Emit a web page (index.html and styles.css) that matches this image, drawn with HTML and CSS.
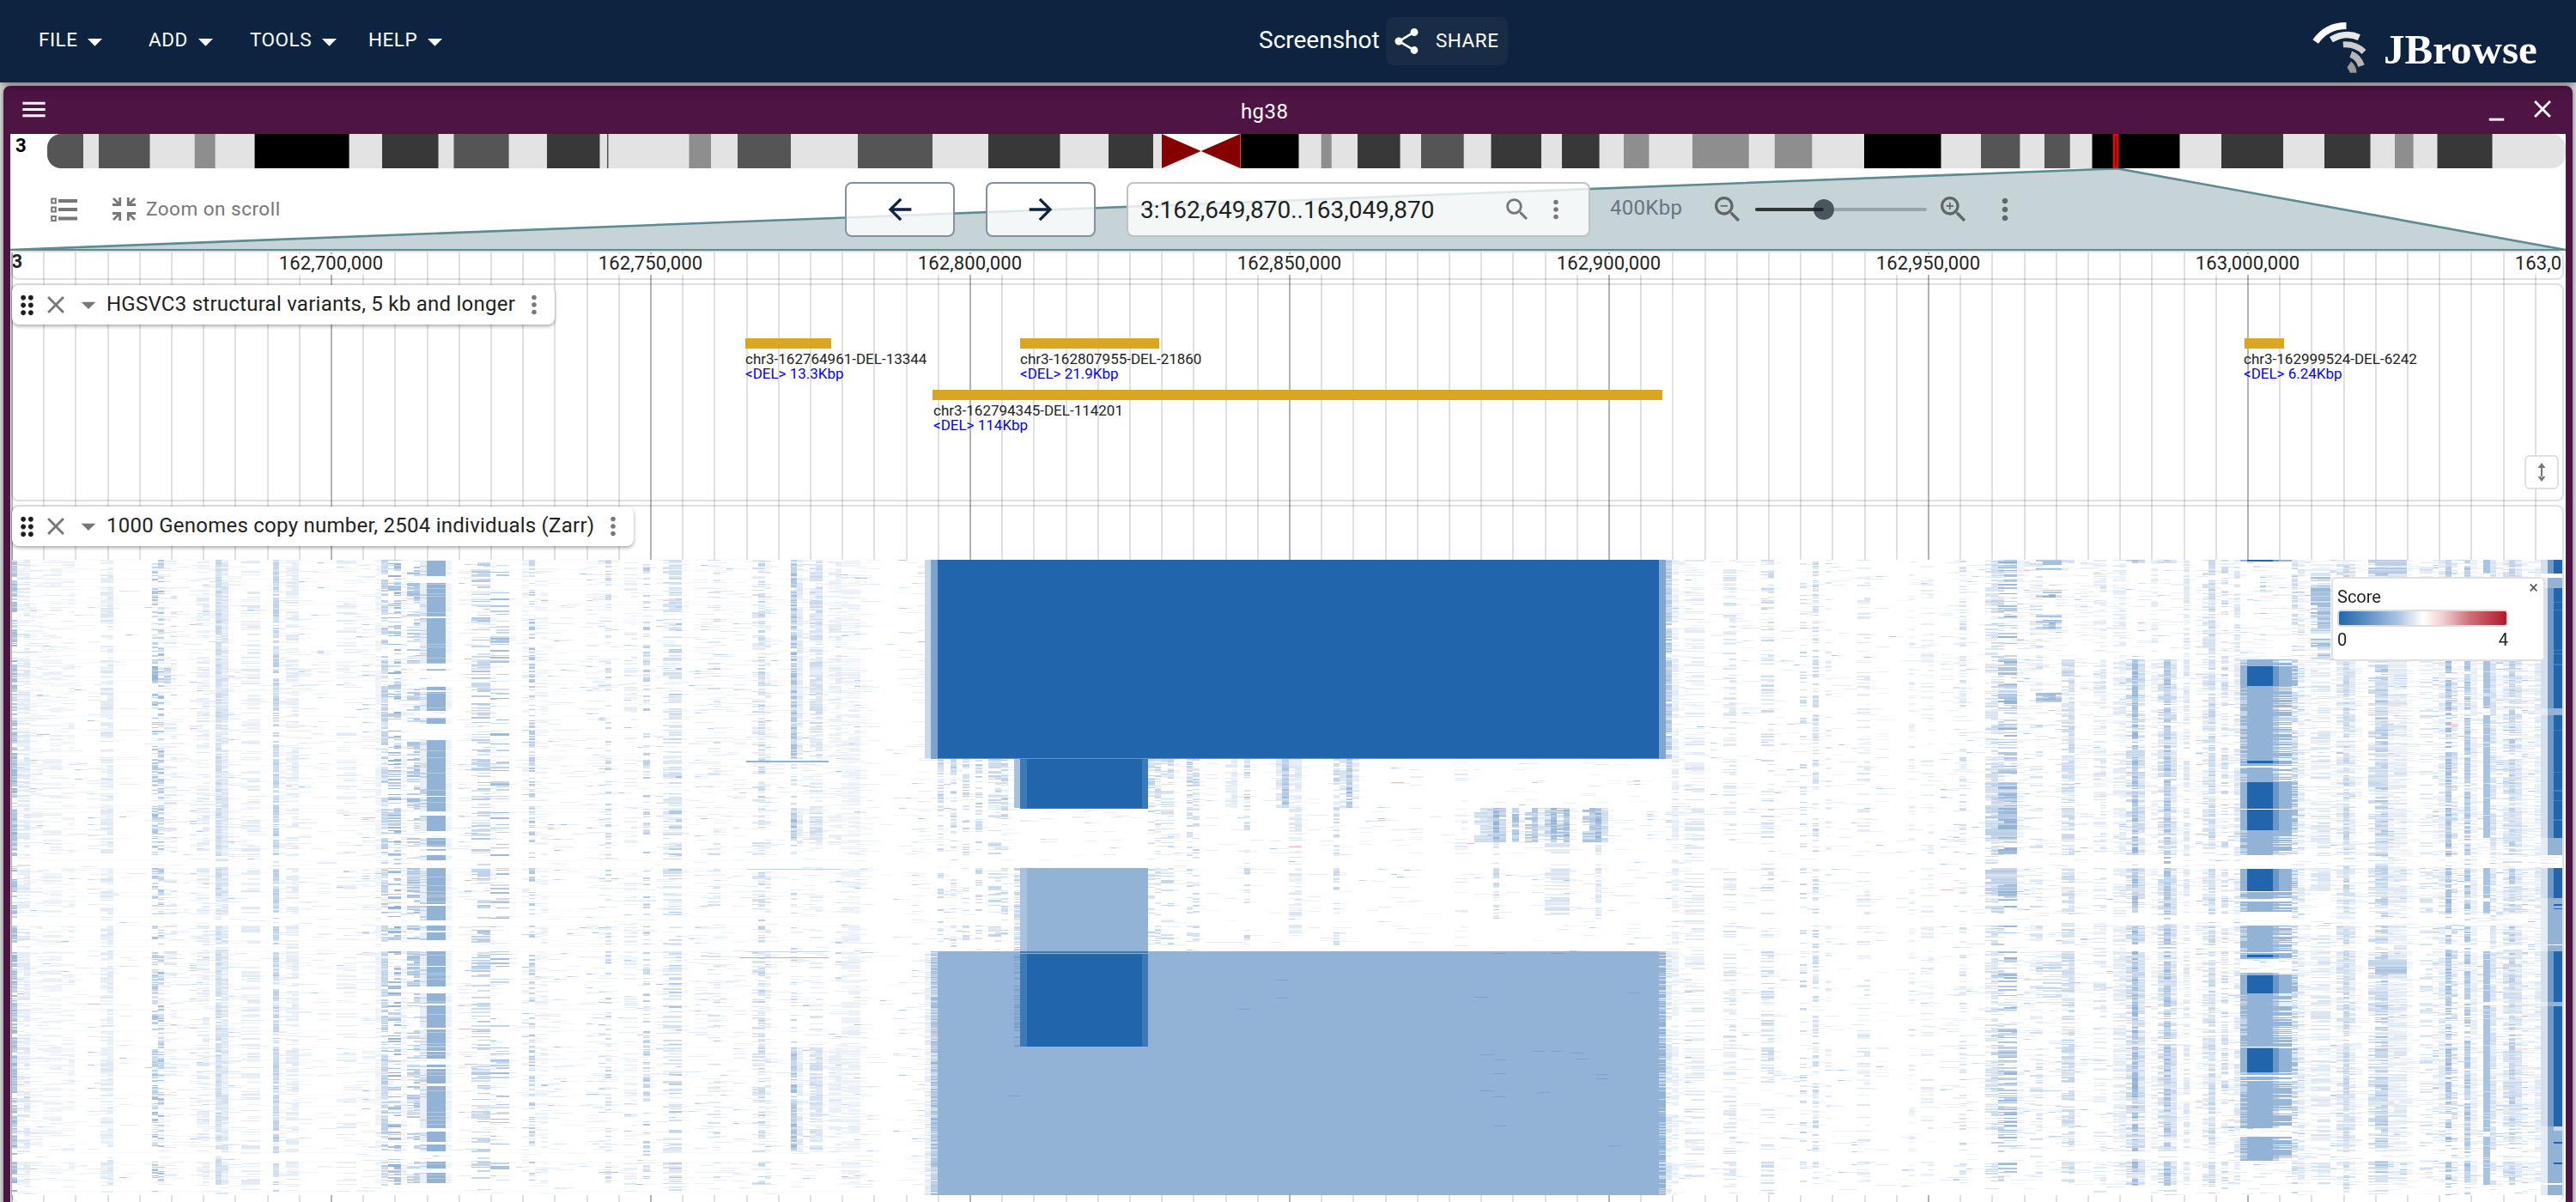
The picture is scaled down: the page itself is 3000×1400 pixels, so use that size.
FILE: index.html
```html
<!DOCTYPE html>
<html lang="en">
<head>
<meta charset="utf-8">
<title>JBrowse</title>
<link rel="stylesheet" href="styles.css">
</head>
<body>
<svg class="sprite" aria-hidden="true">
  <symbol id="i-caret" viewBox="0 0 24 24"><path d="M7 10l5 5 5-5z"/></symbol>
  <symbol id="i-menu" viewBox="0 0 24 24"><path d="M3 18h18v-2H3v2zm0-5h18v-2H3v2zm0-7v2h18V6H3z"/></symbol>
  <symbol id="i-close" viewBox="0 0 24 24"><path d="M19 6.41L17.59 5 12 10.59 6.41 5 5 6.41 10.59 12 5 17.59 6.41 19 12 13.41 17.59 19 19 17.59 13.41 12z"/></symbol>
  <symbol id="i-min" viewBox="0 0 24 24"><path d="M6 19h12v2H6z"/></symbol>
  <symbol id="i-share" viewBox="0 0 24 24"><path d="M18 16.08c-.76 0-1.44.3-1.96.77L8.91 12.7c.05-.23.09-.46.09-.7s-.04-.47-.09-.7l7.05-4.11c.54.5 1.25.81 2.04.81 1.66 0 3-1.34 3-3s-1.34-3-3-3-3 1.34-3 3c0 .24.04.47.09.7L8.04 9.81C7.5 9.31 6.79 9 6 9c-1.66 0-3 1.34-3 3s1.34 3 3 3c.79 0 1.5-.31 2.04-.81l7.12 4.16c-.05.21-.08.43-.08.65 0 1.61 1.31 2.92 2.92 2.92s2.92-1.31 2.92-2.92-1.31-2.92-2.92-2.92z"/></symbol>
  <symbol id="i-back" viewBox="0 0 24 24"><path d="M20 11H7.83l5.59-5.59L12 4l-8 8 8 8 1.41-1.41L7.83 13H20v-2z"/></symbol>
  <symbol id="i-forward" viewBox="0 0 24 24"><path d="M12 4l-1.41 1.41L16.17 11H4v2h12.17l-5.58 5.59L12 20l8-8z"/></symbol>
  <symbol id="i-search" viewBox="0 0 24 24"><path d="M15.5 14h-.79l-.28-.27C15.41 12.59 16 11.11 16 9.5 16 5.91 13.09 3 9.5 3S3 5.91 3 9.5 5.91 16 9.5 16c1.61 0 3.09-.59 4.23-1.57l.27.28v.79l5 4.99L20.49 19l-4.99-5zm-6 0C7.01 14 5 11.99 5 9.5S7.01 5 9.5 5 14 7.01 14 9.5 11.99 14 9.5 14z"/></symbol>
  <symbol id="i-more" viewBox="0 0 24 24"><path d="M12 8c1.1 0 2-.9 2-2s-.9-2-2-2-2 .9-2 2 .9 2 2 2zm0 2c-1.1 0-2 .9-2 2s.9 2 2 2 2-.9 2-2-.9-2-2-2zm0 6c-1.1 0-2 .9-2 2s.9 2 2 2 2-.9 2-2-.9-2-2-2z"/></symbol>
  <symbol id="i-drag" viewBox="0 0 24 24"><path d="M11 18c0 1.1-.9 2-2 2s-2-.9-2-2 .9-2 2-2 2 .9 2 2zm-2-8c-1.1 0-2 .9-2 2s.9 2 2 2 2-.9 2-2-.9-2-2-2zm0-6c-1.1 0-2 .9-2 2s.9 2 2 2 2-.9 2-2-.9-2-2-2zm6 4c1.1 0 2-.9 2-2s-.9-2-2-2-2 .9-2 2 .9 2 2 2zm0 2c-1.1 0-2 .9-2 2s.9 2 2 2 2-.9 2-2-.9-2-2-2zm0 6c-1.1 0-2 .9-2 2s.9 2 2 2 2-.9 2-2-.9-2-2-2z"/></symbol>
</svg>

<header class="appbar">
  <nav class="menus">
    <button class="menu menu-file">FILE<svg class="caret"><use href="#i-caret"/></svg></button>
    <button class="menu menu-add">ADD<svg class="caret"><use href="#i-caret"/></svg></button>
    <button class="menu menu-tools">TOOLS<svg class="caret"><use href="#i-caret"/></svg></button>
    <button class="menu menu-help">HELP<svg class="caret"><use href="#i-caret"/></svg></button>
  </nav>
  <div class="session">
    <span class="session-name">Screenshot</span>
    <button class="share"><svg class="share-icon"><use href="#i-share"/></svg>SHARE</button>
  </div>
  <div class="brand">
    <svg class="brand-mark" viewBox="100 76 190 182" fill="none">
      <path d="M111 146Q150 90 219 90" stroke="#fff" stroke-width="24"/>
      <path d="M166 139Q215 109 264 131" stroke="#e8e8e8" stroke-width="22"/>
      <path d="M208 156Q252 153 281 182" stroke="#ccc" stroke-width="21"/>
      <path d="M235 190Q262 200 272 231" stroke="#b5b5b5" stroke-width="23"/>
      <path d="M236 215L222 236L233 255H255Q256 233 236 215Z" fill="#999"/>
    </svg>
    <span class="brand-name">JBrowse</span>
  </div>
</header>

<main class="view">
  <div class="titlebar">
    <svg class="menu-icon"><use href="#i-menu"/></svg>
    <span class="view-name">hg38</span>
    <div class="window-buttons">
      <svg class="min-icon"><use href="#i-min"/></svg>
      <svg class="close-icon"><use href="#i-close"/></svg>
    </div>
  </div>

  <div class="content">
    <div class="overview">
      <span class="ref-name">3</span>
      <svg class="ideogram" id="ideogram" viewBox="55 0 2933 40"></svg>
    </div>

    <div class="header">
      <svg class="zoom-shape" viewBox="12 196 2976 96">
        <path d="M12 291L2461 196H2467L2988 291Z" fill="#c6d4d8"/>
        <path d="M12 291L2461 196.5H2467L2988 291" fill="none" stroke="#5c8b90" stroke-width="2.6"/>
        <path d="M12 291H2988" stroke="#5c8b90" stroke-width="2"/>
      </svg>
      <div class="toolbar">
        <svg class="tracklist-icon" viewBox="0 0 31 28" fill="none" stroke="#777">
          <path d="M9 4h22M9 14h22M9 24.500h22" stroke-width="4"/>
          <path d="M1.200 1.500h4.600v5h-4.600zM1.200 11.500h4.600v5h-4.600zM1.200 22h4.600v5h-4.600z" stroke-width="2"/>
        </svg>
        <svg class="shrink-icon" viewBox="0 0 27 27" fill="none" stroke="#777" stroke-width="2.800">
          <path d="M1 1l7 7M26 1l-7 7M1 26l7-7M26 26l-7-7M0 8.500h8.700V0M27 8.500h-8.700V0M0 18.500h8.700V27M27 18.500h-8.700V27"/>
        </svg>
        <span class="zoom-scroll">Zoom on scroll</span>
        <div class="nav">
          <button class="pan"><svg><use href="#i-back"/></svg></button>
          <button class="pan"><svg><use href="#i-forward"/></svg></button>
        </div>
        <div class="search">
          <span class="locus">3:162,649,870..163,049,870</span>
          <svg class="search-icon"><use href="#i-search"/></svg>
          <svg class="search-more"><use href="#i-more"/></svg>
        </div>
        <span class="span-size">400Kbp</span>
        <svg class="zoom-icon" viewBox="0 0 24 24"><use href="#i-search"/><path d="M7 9h5v1H7z"/></svg>
        <svg class="slider" viewBox="0 0 200 26">
          <rect x="0" y="11" width="200" height="4" rx="2" fill="#9aa5aa"/>
          <circle cx="80" cy="13" r="12" fill="#4b565c"/>
          <rect x="0" y="11" width="80" height="4" rx="2" fill="#1c1d1f" fill-opacity=".82"/>
        </svg>
        <svg class="zoom-icon" viewBox="0 0 24 24"><use href="#i-search"/><path d="M12 10h-2v2H9v-2H7V9h2V7h1v2h2v1z"/></svg>
        <svg class="toolbar-more"><use href="#i-more"/></svg>
      </div>
    </div>

    <div class="tracks">
      <svg class="gridlines" id="gridlines" viewBox="12 292 2976 1108"></svg>
      <div class="ruler" id="ruler">
        <svg class="ruler-svg" id="ruler-svg" viewBox="15 294 2969 30"></svg>
      </div>

      <section class="track track-variants">
        <div class="track-label">
          <svg class="drag"><use href="#i-drag"/></svg>
          <svg class="x"><use href="#i-close"/></svg>
          <svg class="drop"><use href="#i-caret"/></svg>
          <span class="track-name name-variants">HGSVC3 structural variants, 5 kb and longer</span>
          <svg class="dots"><use href="#i-more"/></svg>
        </div>
        <svg class="features" viewBox="15 378 2969 204">
          <g fill="#daa520">
            <rect x="868" y="394" width="100" height="12"/>
            <rect x="1188" y="394" width="162" height="12"/>
            <rect x="1086" y="454" width="850" height="12"/>
            <rect x="2614" y="394" width="46" height="12"/>
          </g>
          <g class="feature-text">
            <text x="868" y="424">chr3-162764961-DEL-13344</text>
            <text x="868" y="441" class="alt">&lt;DEL&gt; 13.3Kbp</text>
            <text x="1188" y="424">chr3-162807955-DEL-21860</text>
            <text x="1188" y="441" class="alt">&lt;DEL&gt; 21.9Kbp</text>
            <text x="1087" y="484">chr3-162794345-DEL-114201</text>
            <text x="1087" y="501" class="alt">&lt;DEL&gt; 114Kbp</text>
            <text x="2613" y="424">chr3-162999524-DEL-6242</text>
            <text x="2613" y="441" class="alt">&lt;DEL&gt; 6.24Kbp</text>
          </g>
        </svg>
        <button class="resize">
          <svg viewBox="0 0 12 22"><path d="M5 5h2v12H5zM6 0l4.500 6h-9zM6 22l4.500-6h-9z"/></svg>
        </button>
      </section>

      <section class="track track-copies">
        <div class="track-label">
          <svg class="drag"><use href="#i-drag"/></svg>
          <svg class="x"><use href="#i-close"/></svg>
          <svg class="drop"><use href="#i-caret"/></svg>
          <span class="track-name name-copies">1000 Genomes copy number, 2504 individuals (Zarr)</span>
          <svg class="dots"><use href="#i-more"/></svg>
        </div>
        <canvas class="heatmap" id="heatmap" width="2970" height="740"></canvas>
        <div class="legend">
          <div class="legend-head"><span>Score</span><span class="legend-close">×</span></div>
          <div class="legend-bar"></div>
          <div class="legend-scale"><span>0</span><span>4</span></div>
        </div>
      </section>
    </div>
  </div>
</main>
<script src="view.js"></script>
</body>
</html>
```
FILE: styles.css
```css
* { box-sizing: border-box; }
html, body { height: 1400px; overflow: hidden; }
body {
  margin: 0;
  background: #dcdadd;
  font-family: Roboto, "Liberation Sans", sans-serif;
  color: #1f1f1f;
}
svg { display: block; flex: none; }
button { font: inherit; color: inherit; background: none; border: 0; padding: 0; margin: 0; }
.sprite { display: none; }

/* App bar */
.appbar {
  position: relative;
  z-index: 2;
  display: grid;
  grid-template-columns: 1466px 1fr 307px;
  height: 96px;
  background: #0d233f;
  color: #fff;
  fill: #fff;
  box-shadow: 0 4px 8px -2px rgba(0,0,0,.35), 0 4px 16px rgba(0,0,0,.2);
}
.menus { display: flex; padding-left: 45px; height: 92px; }
.menu { display: flex; align-items: center; font-size: 22.5px; letter-spacing: .5px; }
.caret { width: 41px; height: 41px; margin: 5px 0 0 0; }
.menu-file { width: 128px; }
.menu-add { width: 118px; }
.menu-tools { width: 138px; }
.session { display: flex; align-items: center; }
.session-name { width: 148px; font-size: 28px; white-space: nowrap; margin-top: -4px; }
.share {
  display: flex;
  align-items: center;
  width: 142px;
  height: 56px;
  border-radius: 8px;
  background: #182c46;
  font-size: 22.5px;
  letter-spacing: .5px;
  padding: 0 0 3px 6px;
}
.share-icon { width: 36px; height: 36px; margin: 3px 16px 0 0; }
.brand { display: flex; align-items: flex-start; }
.brand-mark { width: 63px; height: 61px; margin-top: 25px; }
.brand-name { font: bold 49px/60px "Liberation Serif", serif; margin: 28px 0 0 20px; }

/* View window */
.view {
  margin: 4px 4px 0;
  height: 1310px;
  padding: 0 8px;
  border-radius: 8px;
  background: #4e1443;
  box-shadow: 0 2px 6px rgba(0,0,0,.5);
}
.titlebar {
  display: grid;
  grid-template-columns: 1433px 1fr 98px;
  align-items: center;
  height: 56px;
  color: #fff;
  fill: #fff;
}
.menu-icon { width: 35px; height: 35px; margin: -2px 0 0 10px; }
.view-name { font-size: 24px; margin-top: 4px; letter-spacing: .4px; }
.window-buttons { display: flex; margin-top: -2px; }
.min-icon { width: 35px; height: 35px; }
.close-icon { width: 34px; height: 34px; margin-left: 19px; }
.content { background: #fff; height: 1250px; }

.overview { display: flex; height: 40px; }
.ref-name { width: 43px; padding-left: 6px; font-size: 22px; line-height: 28px; font-weight: 700; color: #000; }
.ideogram { width: 2933px; height: 40px; }

/* Navigation header */
.header { display: grid; height: 96px; }
.header > * { grid-area: 1 / 1; }
.zoom-shape { width: 2976px; height: 96px; }
.toolbar { display: flex; align-items: center; height: 96px; fill: #616668; }
.tracklist-icon { width: 31px; height: 28px; margin-left: 47px; }
.shrink-icon { width: 27px; height: 27px; margin: -2px 0 0 41px; }
.zoom-scroll { width: 826px; padding-left: 12px; margin-top: -3px; font-size: 22.5px; letter-spacing: .5px; color: #777; }
.nav { display: flex; gap: 36px; width: 328px; }
.pan {
  width: 128px;
  height: 64px;
  display: grid;
  place-items: center;
  border: 2px solid #8390a3;
  border-radius: 8px;
  background: rgba(255,255,255,.8);
  fill: #0d233f;
}
.pan svg { width: 40px; height: 40px; }
.search {
  display: flex;
  align-items: center;
  width: 540px;
  height: 64px;
  border: 2px solid #c0c2c3;
  border-radius: 8px;
  background: rgba(255,255,255,.8);
}
.locus { width: 420px; padding-left: 14px; font-size: 28px; letter-spacing: 0; }
.search-icon, .search-more { width: 34px; height: 34px; fill: #777; }
.search-icon { margin: 0 0 0 16px; }
.search-more { margin-left: 11px; }
.span-size { width: 119px; padding-left: 23px; margin-top: -4px; font-size: 24px; letter-spacing: .3px; color: #68757f; }
.zoom-icon { width: 40px; height: 40px; margin-left: 21px; }
.slider { width: 200px; height: 26px; margin-left: 12px; }
.slider + .zoom-icon { margin-left: 11px; }
.toolbar-more { width: 40px; height: 40px; margin-left: 20px; }

/* Tracks */
.tracks { position: relative; height: 1108px; padding: 0 2px 0 1px; }
.gridlines { position: absolute; inset: 0; width: 2976px; height: 1108px; }
.ruler {
  position: relative;
  height: 34px;
  border: 2px solid rgba(0,0,0,.12);
  border-radius: 8px;
  margin-bottom: 4px;
}
.ruler-svg { width: 2969px; height: 30px; }
.ruler text, .feature-text text { font-family: Roboto, "Liberation Sans", sans-serif; }
.tick-label { font-size: 22px; text-anchor: middle; fill: #222; letter-spacing: .15px; }
.ruler-ref { font-size: 22px; font-weight: 700; fill: #222; }
.track {
  position: relative;
  border: 2px solid rgba(0,0,0,.12);
  border-radius: 8px;
}
.track-variants { height: 254px; }
.track-copies { height: 812px; margin-top: 4px; border-bottom: 0; }
.track-label {
  position: relative;
  display: inline-flex;
  vertical-align: top;
  align-items: center;
  height: 46px;
  margin-left: -1px;
  background: #fff;
  border-radius: 8px;
  box-shadow: 0 2px 4px rgba(0,0,0,.35);
  fill: #777;
}
.drag { width: 35px; height: 35px; fill: #1f1f1f; }
.x { width: 34px; height: 34px; margin-left: -1px; }
.drop { width: 40px; height: 40px; margin-left: 1px; }
.track-name { white-space: nowrap; font-size: 24px; margin: -2px 0 0 1px; letter-spacing: .25px; }
.name-variants { width: 481px; }
.name-copies { width: 573px; }
.dots { width: 34px; height: 34px; margin-right: 7px; }
.features { position: relative; width: 2969px; height: 204px; }
.feature-text { font-size: 17px; fill: #222; }
.feature-text .alt { fill: #00f; }
.resize {
  position: absolute;
  right: 4px;
  bottom: 12px;
  width: 40px;
  height: 40px;
  display: grid;
  place-items: center;
  border: 2px solid #e0e0e0;
  border-radius: 6px;
  background: #fff;
  fill: #777;
}
.resize svg { width: 12px; height: 22px; }
.heatmap { display: block; margin: 16px 0 0 -1px; background: #fff; }
.legend {
  position: absolute;
  left: 2700px;
  top: 82px;
  width: 249px;
  height: 98px;
  border: 2px solid #e0e0e0;
  border-radius: 6px;
  background: #fff;
  padding: 4px 10px 0 5px;
  font-size: 20px;
}
.legend-head { display: flex; justify-content: space-between; height: 32px; line-height: 34px; }
.legend-close { line-height: 12px; color: #555; margin-right: -4px; }
.legend-bar {
  width: 199px;
  height: 20px;
  border: 2px solid #ddd;
  border-radius: 4px;
  background: linear-gradient(90deg, #2166ac 0%, #6c99cb 20%, #a9c3e0 35%, #fff 50%, #f0cfd2 62%, #cf7079 78%, #b2182b 100%);
}
.legend-scale { display: flex; justify-content: space-between; width: 199px; line-height: 30px; }
```
FILE: view.js
```js
const SVG = 'http://www.w3.org/2000/svg';
function add(parent, name, attrs, text) {
  const el = document.createElementNS(SVG, name);
  for (const k in attrs) el.setAttribute(k, attrs[k]);
  if (text) el.textContent = text;
  parent.appendChild(el);
  return el;
}

/* Chromosome 3 cytobands: [start px, end px, colour] */
const g50 = '#555', g75 = '#383838', g25 = '#8e8e8e', g100 = '#000';
const bands = [
  [55, 97, g50], [115, 174.500, g50], [226.700, 250.600, g25], [296.600, 406.600, g100],
  [445, 510.500, g75], [528.500, 592.600, g50], [637, 698.500, g75], [707, 708.500, g50],
  [802.500, 828, g25], [859, 921, g50], [999, 1086, g50], [1151, 1234.500, g75],
  [1291, 1343, g75], [1444.500, 1512.500, g100], [1538.700, 1550.700, g25],
  [1581, 1630.600, g75], [1655, 1704.700, g50], [1736.500, 1795, g75], [1819, 1862.600, g75],
  [1891, 1920.400, g25], [1971, 2036.700, g25], [2066.800, 2110.300, g25],
  [2171, 2260.500, g100], [2307, 2352.400, g50], [2381, 2410.700, g50],
  [2436.500, 2538.500, g100], [2587, 2659, g75], [2707, 2760.500, g75],
  [2789, 2810.600, g25], [2838.500, 2902.500, g75]
];
const ideo = document.getElementById('ideogram');
const clip = add(add(ideo, 'defs', {}), 'clipPath', { id: 'chrom' });
add(clip, 'rect', { x: 55, y: 0, width: 2933, height: 40, rx: 16 });
const chrom = add(ideo, 'g', { 'clip-path': 'url(#chrom)' });
add(chrom, 'rect', { x: 55, y: 0, width: 2933, height: 40, fill: '#e3e3e3' });
for (const [a, b, c] of bands) add(chrom, 'rect', { x: a, y: 0, width: b - a, height: 40, fill: c });
add(chrom, 'rect', { x: 1353, y: 0, width: 91.500, height: 40, fill: '#fff' });
add(chrom, 'path', { d: 'M1353 0L1398.700 20L1353 40ZM1444.500 0L1398.700 20L1444.500 40Z', fill: '#870000' });
add(ideo, 'rect', { x: 2462, y: 1, width: 4, height: 38, fill: 'rgba(255,0,0,.25)', stroke: '#f00', 'stroke-width': 2.400 });

/* Gridlines every 5 kb, labels every 50 kb */
const grid = document.getElementById('gridlines');
const ruler = document.getElementById('ruler-svg');
for (let i = 0; i < 80; i++) {
  const x = Math.round(14 + i * 37.200);
  add(grid, 'rect', { x: x - 1, y: 294, width: 2, height: 1106, fill: i % 10 ? '#e0e0e0' : '#b4b4b4' });
}
for (let i = 1; i <= 8; i++) {
  const x = 13.500 + i * 372;
  const pos = (162650000 + i * 50000).toLocaleString('en-US');
  add(ruler, 'rect', { x: x - 62, y: 296, width: 124, height: 24, fill: '#fff' });
  add(ruler, 'text', { x: x, y: 314, class: 'tick-label' }, pos);
}
add(ruler, 'rect', { x: 12, y: 294, width: 15, height: 24, fill: '#fff' });
add(ruler, 'text', { x: 13.500, y: 312, class: 'ruler-ref' }, '3');

/* Copy-number heatmap: one pixel row per sample group, 1 kb bins */
const cv = document.getElementById('heatmap');
const ctx = cv.getContext('2d');
let seed = 20504;
function rnd() {
  seed = (seed + 0x6D2B79F5) | 0;
  let t = Math.imul(seed ^ (seed >>> 15), 1 | seed);
  t = (t + Math.imul(t ^ (t >>> 7), 61 | t)) ^ t;
  return ((t ^ (t >>> 14)) >>> 0) / 4294967296;
}
const X = n => Math.round(12.900 + 7.440 * n - 14);
/* loss 0 = two copies (white), 1 = one copy, 2 = none */
function shade(v) {
  const lerp = (a, b, t) => Math.round(a + (b - a) * t);
  const w = [255, 255, 255], m = [146, 178, 214], d = [33, 102, 172];
  const [a, b, t] = v < 1 ? [w, m, v] : [m, d, Math.min(1, v - 1)];
  return `rgb(${lerp(a[0], b[0], t)},${lerp(a[1], b[1], t)},${lerp(a[2], b[2], t)})`;
}
/* n1 and y1 are exclusive; y is in page rows, 652 at the top */
function box(n0, n1, y0, y1, v) {
  ctx.fillStyle = shade(v);
  ctx.fillRect(X(n0), y0 - 652, X(n1) - X(n0), y1 - y0);
}
const groups = [[652, 768], [768, 884], [884, 941], [941, 996], [1011, 1065], [1078, 1100], [1108, 1220], [1220, 1341], [1353, 1380]];
function activity(y) {
  for (const [a, b] of groups) {
    if (y >= a && y < b) {
      const t = (y - a) / (b - a);
      return (y - a < 2 ? 1.500 : 1) * (1.100 - .5 * t);
    }
  }
  return .12;
}
function noise() {
  const pts = Array.from({ length: 160 }, rnd);
  return y => { const p = (y - 652) / 7, i = Math.floor(p), f = p - i; return pts[i] * (1 - f) + pts[i + 1] * f; };
}
/* first bin, width, density, strength, row ranges */
function column(n, w, density, strength, ranges = [[652, 1392]]) {
  const nz = noise();
  for (const [a, b] of ranges) {
    let y = a;
    while (y < b) {
      const p = 1.250 * density * activity(y) * (.35 + 1.300 * nz(y));
      const h = rnd() < .4 ? 2 : 1;
      if (rnd() < p) {
        const v = Math.min(1, strength * (.5 + .65 * rnd()));
        const k = rnd();
        if (k < .35 && w > 1) box(n + 1, n + w, y, Math.min(b, y + h), v);
        else box(n, n + w, y, Math.min(b, y + h), v);
        if (rnd() < .3) box(n + w, n + w + 1, y, y + 1, v * .3);
      }
      y += h;
    }
  }
}

/* Faint scattered calls */
const weight = Array.from({ length: 400 }, () => Math.pow(rnd(), 2.200));
for (let y = 652; y < 1391; y++) {
  const act = activity(y);
  for (let n = 0; n < 398; n++) {
    let base = .085;
    if (n > 132 && n < 145 || n > 264 && n < 308) base = .045;
    if (n > 144 && n < 259) base = .035;
    if (n > 355) base = .22;
    if (rnd() < base * weight[n] * (.3 + act) * 1.600) {
      const w = 2 + (rnd() < .3 ? 1 : 0);
      if (rnd() < .014) {
        ctx.fillStyle = rnd() < .2 ? '#eab8c2' : '#fae6ea';
        ctx.fillRect(X(n), y - 652, 15, 1);
      } else {
        box(n, n + w, y, y + 1, .1 + .16 * rnd());
        if (rnd() < .25) box(n, n + 1, y, y + 1, .25 + .5 * rnd());
      }
    }
  }
  if (rnd() < .04 || groups.some(g => g[0] === y)) box(0, 132, y, y + 1, .06);
}

const cols = [
  [0, 1, .75, .85], [1, 2, .6, .3], [3, 2, .15, .2], [5, 3, .35, .2], [8, 2, .28, .2], [14, 2, .75, .3],
  [22, 1, .4, .75], [23, 1, .35, .75], [24, 2, .15, .3], [29, 2, .35, .28], [32, 2, 1.300, .36], [32, 1, .9, .5],
  [36, 3, .35, .28], [41, 1, .85, .6], [43, 2, .6, .26], [51, 3, .15, .25], [57, 1, .6, .18],
  [58, 1, .7, .6], [59, 2, .38, .95], [61, 1, .2, .2], [72, 3, .42, .65], [75, 3, .2, .8], [80, 1, .2, .2],
  [81, 1, .35, .7], [82, 2, .3, .2], [93, 1, .22, .55], [96, 2, .22, .25], [99, 1, .3, .6], [102, 3, .45, .4], [103, 2, .15, .7],
  [109, 2, .12, .4], [116, 2, .28, .4], [117, 1, .3, .55], [118, 1, .25, .3],
  [268, 2, .35, .35], [274, 2, .3, .45], [280, 1, .15, .5], [282, 1, .4, .5], [284, 1, .15, .3], [289, 2, .25, .3], [297, 1, .18, .25],
  [299, 2, .25, .25], [305, 1, .25, .4], [309, 2, .55, .4], [310, 2, .35, .55],
  [311, 3, .42, .9], [316, 2, .28, .38], [326, 2, .4, .33], [329, 2, .55, .28], [335, 1, .35, .25],
  [340, 1, .55, .33], [343, 2, .6, .38], [344, 1, .5, .55], [346, 1, .38, .5], [348, 1, .5, .35],
  [357, 1, .4, .5], [358, 1, .35, .33], [360, 3, .5, .33], [364, 3, .5, .38], [365, 1, .65, .55], [369, 3, .65, .45], [370, 2, .55, .7],
  [372, 3, .5, .33], [377, 2, .25, .38], [380, 1, .45, .33], [381, 1, .85, .85], [382, 1, .35, .5], [384, 1, .85, .75], [385, 1, .55, .25],
  [388, 1, .85, .4], [390, 3, .75, .42], [391, 1, .55, .65], [395, 1, .5, .3]
];
cols.forEach(c => column(...c));

const lateRows = [[652, 656], [768, 1392]];
const svRows = [[652, 884], [941, 985], [1220, 1345]];
column(122, 1, 1.100, .8, svRows);
column(123, 1, .7, .3, svRows);
column(125, 2, .95, .45, svRows);
column(128, 2, .6, .25, svRows);
column(130, 3, .5, .2);
column(122, 1, .2, .5);
column(125, 2, .2, .3);
column(22, 1, 1.400, 1, [[776, 796]]);
column(23, 2, 1, .6, [[778, 796]]);
column(317, 4, .8, .85, [[652, 664], [686, 696], [712, 734], [807, 818]]);
column(318, 2, 1.400, 1, [[692, 696], [725, 733], [809, 816]]);
column(317, 4, .3, .45, [[1108, 1176], [1266, 1276]]);
column(321, 2, .8, .5, lateRows);
column(331, 3, .9, .5, lateRows);
column(332, 1, .8, .9, lateRows);
column(336, 3, .8, .45, lateRows);
column(337, 1, .9, .8, lateRows);
column(309, 5, 1, .6, [[911, 980], [1011, 1042]]);
column(311, 3, 1.700, 1, [[911, 930], [938, 966], [1030, 1042]]);
column(360, 3, 1, .8, [[672, 768]]);
column(369, 6, 1.100, .75, [[652, 668], [1118, 1134]]);

/* Rows between the two large deletions */
const mid = [[884, 941]], peak = [[941, 981]], low = [[884, 1108]];
[[145, 1], [147, 1], [149, 1], [151, 1], [153, 2], [155, 1], [178, 1], [179, 1], [180, 2], [184, 1], [185, 1], [193, 1], [207, 1]]
  .forEach(([n, w]) => { column(n, w, .3, .5, low); column(n, w, .25, .6, mid); });
column(190, 2, 1, .3, mid);
column(198, 1, .8, .35, mid);
column(199, 1, 1.200, .75, mid);
column(200, 2, .55, .3, low);
column(208, 1, .8, .35, mid);
column(209, 1, 1.300, .8, mid);
column(210, 1, .6, .3, mid);
column(226, 2, .2, .25, low);
[[229, 3, 1, .45], [231, 2, 1.200, .5], [232, 1, 1.900, 1], [233, 1, .9, .6], [235, 1, .9, .8], [237, 2, 1.200, .75], [239, 2, .8, .4],
 [240, 2, 1.300, .7], [241, 1, 1.400, .95], [242, 2, 1.100, .8], [243, 1, 1.100, .9], [246, 2, .9, .75], [248, 1, 1.700, .9], [249, 1, 1.100, .45]]
  .forEach(c => column(...c, peak));
[[232, 1, .4, .5], [240, 4, .4, .35], [248, 1, .7, .35]].forEach(c => column(...c, [[981, 1070]]));
column(259, 1, 1, .7, [[652, 884]]);
column(259, 1, .5, .35, [[1108, 1392]]);
column(260, 1, .5, .25);
column(262, 3, .3, .3);

/* Common deletion near 162,715,000 */
const common = [[653, 671], [679, 718], [720, 773], [779, 781], [800, 804], [806, 828], [836, 843], [862, 927], [928, 945], [950, 968],
  [976, 986], [989, 991], [996, 1002], [1011, 1053], [1055, 1072], [1078, 1084], [1086, 1095], [1108, 1125], [1126, 1149], [1157, 1169],
  [1171, 1197], [1199, 1224], [1225, 1233], [1240, 1243], [1245, 1262], [1265, 1314], [1318, 1330], [1333, 1341], [1353, 1361], [1366, 1378]];
for (const [a, b] of common) {
  column(62, 3, .6, .75, [[a, b]]);
  box(65, 68, a, b, 1);
  for (let y = a; y < b; y++) {
    box(64, 65, y, y + 1, rnd() < .2 ? .6 : .22);
    if (rnd() < .1) box(65, 68, y, y + 1, .7);
    box(68, 69, y, y + 1, rnd() < .5 ? .2 : .08);
  }
}

/* Deletion at 163,000,000 */
const loss1 = [[768, 892], [894, 911], [967, 996], [1039, 1047], [1050, 1062], [1078, 1109], [1110, 1117], [1133, 1219], [1220, 1252],
  [1254, 1258], [1259, 1314], [1324, 1352]];
for (const [a, b] of loss1) {
  box(350, 354, a, b, 1);
  for (let y = a; y < b; y++) {
    box(349, 350, y, y + 1, rnd() < .55 ? .95 : .55);
    const k = rnd();
    if (k < .62) box(354, 357, y, y + 1, .95);
    else if (k < .85) { box(354, 355, y, y + 1, .7); box(355, 357, y, y + 1, .2); }
    else box(354, 355, y, y + 1, .4);
    if (rnd() < .35) box(357, 358, y, y + 1, .6);
  }
}
for (const [a, b] of [[652, 654], [776, 799], [886, 889], [911, 942], [943, 967], [1012, 1038], [1112, 1115], [1136, 1157], [1221, 1249]]) {
  box(349, 357, a, b, 1);
  box(350, 354, a, b, 2);
  box(354, 355, a, b, 1.350);
  for (let y = a; y < b; y++) box(357, 358, y, y + 1, rnd() < .5 ? .9 : .3);
}

/* Narrow deletion before the right edge, then the edge deletion */
for (const [a, b] of [[652, 668], [768, 825], [833, 976], [1011, 1046], [1050, 1065], [1108, 1167], [1171, 1318], [1324, 1380]]) {
  for (let y = a; y < b; y++) box(387, 388, y, y + 1, rnd() < .9 ? .78 : .4);
}
for (const [a, b, v] of [[652, 668, 2], [673, 685, 1], [685, 825, 2], [825, 833, 1], [833, 976, 2], [976, 996, 1], [1011, 1046, 2],
  [1046, 1100, 1], [1101, 1108, 1], [1108, 1167, 2], [1167, 1172, 1], [1172, 1312, 2], [1312, 1317, .5], [1317, 1378, 1], [1380, 1392, 1]]) {
  box(396, 397, a, b, v === 2 ? .4 : .25);
  box(397, 398, a, b, v === 2 ? 1.300 : 1);
  box(398, 400, a, b, v);
}
[[1053, 1055], [1058, 1059], [1330, 1332], [1354, 1356]].forEach(([a, b]) => box(398, 400, a, b, 2));
for (let i = 0; i < 14; i++) { const y = 690 + Math.floor(rnd() * 280); box(398, 400, y, y + 1, 1.700); }

/* Long thin calls around 162,765,000 */
box(115, 128, 886, 888, 1);
box(115, 130, 1012, 1013, .55);
box(115, 128, 1108, 1109, .5);
box(114, 128, 1115, 1116, .9);

/* 114 kb deletion */
box(143, 144, 652, 883, .5);
box(144, 145, 652, 884, 1.200);
box(145, 258, 652, 883, 2);
box(145, 258, 883, 884, 1.400);
box(258, 259, 652, 884, 1.150);
box(145, 258, 1108, 1392, 1);
for (let y = 1108; y < 1392; y++) {
  const k = rnd();
  box(143, 144, y, y + 1, k * .35);
  box(144, 145, y, y + 1, .3 + rnd() * .7);
  box(258, 259, y, y + 1, rnd() < .6 ? 1 : .3 + rnd() * .5);
}
/* second-allele calls inside the one-copy block */
for (const [n, y] of [[198, 1141], [198, 1162], [192, 1175], [232, 1110], [241, 1110], [229, 1161], [253, 1156], [238, 1224], [241, 1224],
  [244, 1226], [230, 1228], [245, 1233], [232, 1234], [232, 1250], [248, 1251], [248, 1256], [230, 1270], [239, 1272], [232, 1277],
  [156, 1276], [232, 1311], [250, 1334]]) box(n, n + 2, y, y + 1, 1.200);

/* 22 kb deletion */
box(157, 158, 884, 941, .8);
box(158, 178, 884, 942, 1.750);
box(159, 177, 884, 941, 2);
box(158, 159, 1011, 1108, .8);
box(159, 178, 1011, 1108, 1);
for (let y = 1011; y < 1220; y++) if (rnd() < .65) box(157, 158, y, y + 1, y < 1108 ? .2 + rnd() * .5 : 1 + rnd() * .3);
box(158, 178, 1108, 1219, 1.750);
box(159, 177, 1110, 1219, 2);
box(158, 178, 1110, 1111, 1);
```
